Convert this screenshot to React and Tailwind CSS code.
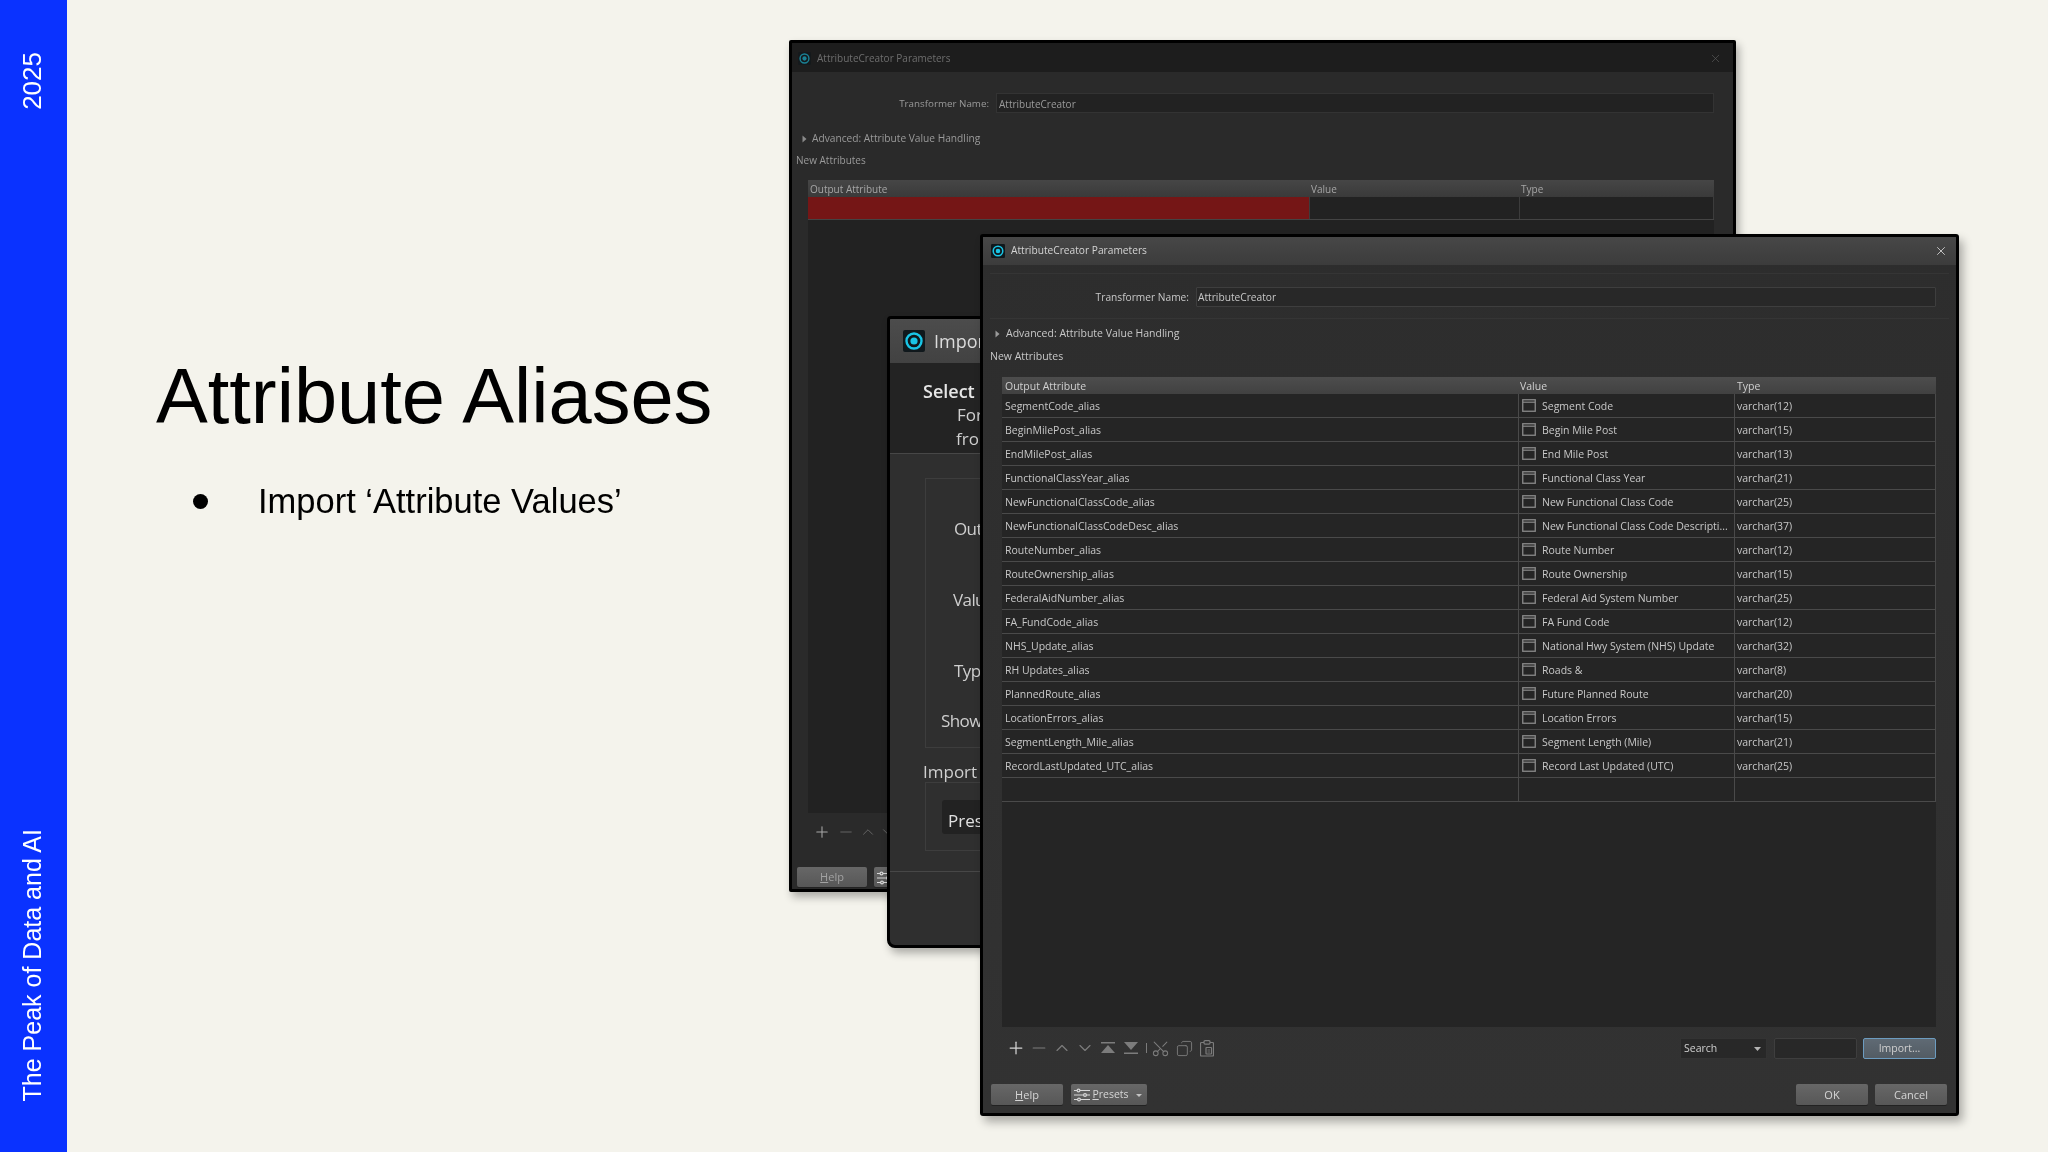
import React from "react";
import { Plus, Minus, ChevronUp, ChevronDown, Scissors, Copy, X } from "lucide-react";

const rows = [
  ["SegmentCode_alias", "Segment Code", "varchar(12)"],
  ["BeginMilePost_alias", "Begin Mile Post", "varchar(15)"],
  ["EndMilePost_alias", "End Mile Post", "varchar(13)"],
  ["FunctionalClassYear_alias", "Functional Class Year", "varchar(21)"],
  ["NewFunctionalClassCode_alias", "New Functional Class Code", "varchar(25)"],
  ["NewFunctionalClassCodeDesc_alias", "New Functional Class Code Descripti...", "varchar(37)"],
  ["RouteNumber_alias", "Route Number", "varchar(12)"],
  ["RouteOwnership_alias", "Route Ownership", "varchar(15)"],
  ["FederalAidNumber_alias", "Federal Aid System Number", "varchar(25)"],
  ["FA_FundCode_alias", "FA Fund Code", "varchar(12)"],
  ["NHS_Update_alias", "National Hwy System (NHS) Update", "varchar(32)"],
  ["RH Updates_alias", "Roads &", "varchar(8)"],
  ["PlannedRoute_alias", "Future Planned Route", "varchar(20)"],
  ["LocationErrors_alias", "Location Errors", "varchar(15)"],
  ["SegmentLength_Mile_alias", "Segment Length (Mile)", "varchar(21)"],
  ["RecordLastUpdated_UTC_alias", "Record Last Updated (UTC)", "varchar(25)"],
];

function Logo({ size, dim }) {
  return (
    <svg width={size} height={size} viewBox="0 0 22 22" className={dim ? "opacity-60 shrink-0" : "shrink-0"}>
      <rect width="22" height="22" rx="2" fill="#10181c" />
      <circle cx="11" cy="11" r="7.5" fill="none" stroke="#19c5e6" strokeWidth="2.4" />
      <circle cx="11" cy="11" r="3.6" fill="#19c5e6" />
    </svg>
  );
}

function ValueIcon() {
  return (
    <svg width="14" height="13" viewBox="0 0 14 13" className="shrink-0 -mt-[2px]">
      <rect x="0.75" y="0.75" width="12.5" height="11.5" fill="none" stroke="#8a8a8a" strokeWidth="1.3" />
      <line x1="1" y1="3.2" x2="13" y2="3.2" stroke="#8a8a8a" strokeWidth="1.2" />
    </svg>
  );
}

function MoveEdge({ top }) {
  return (
    <svg width="16" height="12" viewBox="0 0 16 12" className="shrink-0">
      {top ? (
        <>
          <rect x="1" y="0" width="14" height="1.5" fill="#7c7c7c" />
          <path d="M8 3 L15 11 L1 11 Z" fill="#7c7c7c" />
        </>
      ) : (
        <>
          <path d="M1 0 L15 0 L8 8 Z" fill="#7c7c7c" />
          <rect x="1" y="10.5" width="14" height="1.5" fill="#7c7c7c" />
        </>
      )}
    </svg>
  );
}

function PasteIcon() {
  return (
    <svg width="14" height="17" viewBox="0 0 14 17" fill="none" stroke="#7c7c7c" strokeWidth="1.2" className="shrink-0">
      <path d="M4 2.5H1.5a1 1 0 0 0-1 1V15a1 1 0 0 0 1 1H12.5a1 1 0 0 0 1-1V3.5a1 1 0 0 0-1-1H10" />
      <rect x="4" y="0.7" width="6" height="3.4" rx="1" />
      <rect x="6" y="7.5" width="5.5" height="6.5" rx="0.5" />
      <path d="M7.5 10H10M7.5 12H10" strokeWidth="0.8" />
    </svg>
  );
}

function PresetIcon() {
  return (
    <svg width="16" height="14" viewBox="0 0 16 14" className="shrink-0" stroke="#d8d8d8" strokeWidth="1.2" fill="none">
      <path d="M0 2.5H16M0 7H16M0 11.5H16" />
      <circle cx="4.5" cy="2.5" r="1.4" fill="#5e5e5e" />
      <circle cx="11" cy="7" r="1.4" fill="#5e5e5e" />
      <circle cx="5" cy="11.5" r="1.4" fill="#5e5e5e" />
    </svg>
  );
}

function Btn({ className, children }) {
  return (
    <div className={"h-[21px] pt-[1px] bg-gradient-to-b from-[#676767] to-[#575757] rounded-[2px] flex items-center justify-center text-[11px] text-[#d6d6d6] shadow-[0_1px_0_#222] " + className}>
      {children}
    </div>
  );
}

function Arrow({ color }) {
  return (
    <svg width="5" height="8" viewBox="0 0 5 8" className="shrink-0"><path d="M0.5 0.5 L4.5 4 L0.5 7.5 Z" fill={color} /></svg>
  );
}

function BackWindow() {
  return (
    <div className="absolute left-[789px] top-[40px] w-[947px] h-[852px] bg-[#2a2a2a] border-[3px] border-black rounded-[2px] shadow-[3px_5px_9px_rgba(0,0,0,0.3)] flex flex-col text-[10px] text-[#9a9a9a] overflow-hidden">
      <div className="h-[29px] shrink-0 bg-[#1d1d1d] flex items-center pl-[6px] pr-[11px] gap-[6px] text-[#6e6e6e] pt-[1px]">
        <Logo size={13} dim />
        <span className="flex-1">AttributeCreator Parameters</span>
        <X size={13} strokeWidth={1.2} className="text-[#5c5c5c]" />
      </div>
      <div className="flex items-center mt-[21px] pr-[19px] shrink-0">
        <div className="w-[197px] text-right pt-[2px] text-[9.8px]">Transformer Name:</div>
        <div className="ml-[7px] flex-1 h-[20px] bg-[#222222] border border-[#333333] flex items-center pl-[2px] pt-[2px]">AttributeCreator</div>
      </div>
      <div className="flex items-center mt-[18px] h-[16px] pl-[10px] gap-[5px] shrink-0 text-[10.2px]">
        <Arrow color="#8a8a8a" />
        <span>Advanced: Attribute Value Handling</span>
      </div>
      <div className="mt-[5px] h-[16px] pl-[4px] shrink-0 leading-[16px]">New Attributes</div>
      <div className="mt-[12px] ml-[16px] mr-[19px] flex-1 flex flex-col bg-[#222222] min-h-0">
        <div className="h-[17px] shrink-0 bg-gradient-to-b from-[#464646] to-[#3a3a3a] flex items-center text-[#a6a6a6] pt-[2px]">
          <div className="w-[501px] pl-[2px]">Output Attribute</div>
          <div className="w-[210px] pl-[2px]">Value</div>
          <div className="flex-1 pl-[2px]">Type</div>
        </div>
        <div className="h-[23px] shrink-0 flex border-b border-[#444444]">
          <div className="w-[501px] bg-[#751616]"></div>
          <div className="w-[210px] border-l border-[#3c3c3c]"></div>
          <div className="flex-1 border-l border-[#3c3c3c] border-r"></div>
        </div>
      </div>
      <div className="h-[38px] shrink-0 flex items-center pl-[21px] gap-[2px] text-[#6a6a6a]">
        <Plus size={18} strokeWidth={1.4} className="text-[#a8a8a8]" />
        <Minus size={18} strokeWidth={1.2} className="ml-[4px]" />
        <ChevronUp size={18} strokeWidth={1.2} className="ml-[2px]" />
        <ChevronDown size={18} strokeWidth={1.2} />
      </div>
      <div className="h-[38px] shrink-0 flex gap-[7px] pl-[5px] pt-[16px]">
        <Btn className="w-[70px] !h-[20px] !text-[#a2a2a2]"><span><u>H</u>elp</span></Btn>
        <Btn className="w-[76px] !h-[20px] justify-start pl-[3px]"><PresetIcon /></Btn>
      </div>
    </div>
  );
}

function MiddleWindow() {
  return (
    <div className="absolute left-[887px] top-[316px] w-[110px] h-[632px] bg-[#2f2f2f] border-[3px] border-black rounded-tl-[4px] rounded-bl-[8px] shadow-[3px_5px_9px_rgba(0,0,0,0.3)] flex flex-col overflow-hidden text-[18px] text-[#cfcfcf] whitespace-nowrap">
      <div className="h-[44px] shrink-0 bg-gradient-to-b from-[#4c4c4c] to-[#424242] flex items-center pl-[13px] gap-[9px] text-[#dcdcdc]">
        <Logo size={22} />
        <span>Import</span>
      </div>
      <div className="h-[91px] shrink-0 bg-[#232323] border-b border-[#474747] flex flex-col">
        <div className="pl-[33px] pt-[15px] h-[39px] font-semibold text-[#e6e6e6]">Select a</div>
        <div className="pl-[67px] h-[24px] leading-[24px] pt-[1px] text-[17px]">For</div>
        <div className="pl-[66px] h-[24px] leading-[24px] pt-[1px] text-[17px]">from</div>
      </div>
      <div className="ml-[35px] mt-[24px] h-[270px] shrink-0 border-l border-t border-b border-[#3d3d3d] relative flex flex-col text-[17px] tracking-[-0.6px]">
        <div className="pl-[28px] mt-[38px] h-[24px] leading-[24px]">Output</div>
        <div className="pl-[27px] mt-[47px] h-[24px] leading-[24px]">Value</div>
        <div className="pl-[28px] mt-[47px] h-[24px] leading-[24px]">Type</div>
        <div className="pl-[15px] mt-[26px] h-[24px] leading-[24px]">Show</div>
      </div>
      <div className="pl-[33px] mt-[12px] h-[24px] leading-[24px] text-[17px]">Import</div>
      <div className="ml-[35px] h-[69px] mt-[-2px] shrink-0 border-l border-t border-b border-[#3d3d3d] pl-[16px] pt-[17px]">
        <div className="h-[34px] bg-[#222222] rounded-l-[3px] flex items-center pl-[6px] pt-[8px] text-[#e0e0e0] text-[17px]">Preset</div>
      </div>
      <div className="mt-[20px] border-t border-[#474747]"></div>
    </div>
  );
}

function FrontWindow() {
  return (
    <div className="absolute left-[980px] top-[234px] w-[979px] h-[882px] bg-gradient-to-b from-[#2d2d2d] to-[#323232] border-[3px] border-black rounded-[3px] shadow-[4px_6px_10px_rgba(0,0,0,0.3)] flex flex-col text-[10.5px] text-[#c8c8c8] overflow-hidden">
      <div className="h-[28px] shrink-0 bg-gradient-to-b from-[#474747] to-[#3c3c3c] flex items-center pl-[8px] pr-[8px] gap-[6px] text-[#d4d4d4] text-[10.2px]">
        <Logo size={14} />
        <span className="flex-1">AttributeCreator Parameters</span>
        <X size={14} strokeWidth={1.4} className="text-[#dddddd]" />
      </div>
      <div className="flex items-center mt-[8px] mx-[7px] pt-[13px] pb-[11px] pr-[13px] border-y border-[#353535] shrink-0 text-[10.2px]">
        <div className="w-[199px] text-right pt-[2px]">Transformer Name:</div>
        <div className="ml-[7px] flex-1 h-[20px] bg-[#282828] border border-[#3e3e3e] rounded-[1px] flex items-center pl-[1px] pt-[2px]">AttributeCreator</div>
      </div>
      <div className="flex items-center mt-[7px] h-[16px] pl-[12px] gap-[6px] shrink-0">
        <Arrow color="#9a9a9a" />
        <span>Advanced: Attribute Value Handling</span>
      </div>
      <div className="mt-[6px] h-[16px] pl-[7px] shrink-0 leading-[16px]">New Attributes</div>
      <div className="mt-[13px] ml-[19px] mr-[20px] h-[650px] shrink-0 bg-[#252525] flex flex-col">
        <div className="h-[17px] shrink-0 bg-gradient-to-b from-[#4d4d4d] to-[#414141] flex items-center text-[#d0d0d0] pt-[2px]">
          <div className="w-[516px] pl-[3px]">Output Attribute</div>
          <div className="w-[216px] pl-[2px]">Value</div>
          <div className="flex-1 pl-[3px]">Type</div>
        </div>
        {rows.map((r) => (
          <div key={r[0]} className="h-[24px] shrink-0 flex items-center border-b border-[#4a4a4a]">
            <div className="w-[516px] pl-[3px] h-full flex items-center pt-[2px]">{r[0]}</div>
            <div className="w-[216px] pl-[3px] h-full flex items-center gap-[6px] border-l border-[#4a4a4a] whitespace-nowrap overflow-hidden pt-[2px]">
              <ValueIcon />
              <span>{r[1]}</span>
            </div>
            <div className="flex-1 pl-[2px] h-full flex items-center border-l border-r border-[#4a4a4a] pt-[2px]">{r[2]}</div>
          </div>
        ))}
        <div className="h-[24px] shrink-0 flex border-b border-[#4a4a4a]">
          <div className="w-[516px]"></div>
          <div className="w-[216px] border-l border-[#4a4a4a]"></div>
          <div className="flex-1 border-l border-r border-[#4a4a4a]"></div>
        </div>
      </div>
      <div className="h-[42px] shrink-0 flex items-center pl-[23px] pr-[20px] text-[#7c7c7c]">
        <Plus size={20} strokeWidth={1.5} className="text-[#d4d4d4]" />
        <Minus size={20} strokeWidth={1.4} className="ml-[3px]" />
        <ChevronUp size={20} strokeWidth={1.4} className="ml-[3px]" />
        <ChevronDown size={20} strokeWidth={1.4} className="ml-[3px]" />
        <div className="ml-[5px]"><MoveEdge top /></div>
        <div className="ml-[7px]"><MoveEdge /></div>
        <div className="w-px h-[10px] bg-[#7c7c7c] ml-[7px]"></div>
        <Scissors size={19} strokeWidth={1.3} className="ml-[4px] -rotate-90" />
        <Copy size={17} strokeWidth={1.3} className="ml-[6px] -scale-x-100" />
        <div className="ml-[7px]"><PasteIcon /></div>
        <div className="ml-auto flex items-center gap-[7px] text-[#cfcfcf]">
          <div className="w-[87px] h-[21px] bg-[#282828] border border-[#333333] flex items-center justify-between pl-[3px] pr-[5px] pt-[1px]">
            <span>Search</span>
            <svg width="7" height="4" viewBox="0 0 7 4"><path d="M0 0H7L3.5 4Z" fill="#b4b4b4" /></svg>
          </div>
          <div className="w-[83px] h-[21px] bg-[#282828] border border-[#3e3e3e] rounded-[2px]"></div>
          <div className="ml-[-1px] w-[73px] h-[21px] bg-gradient-to-b from-[#5f6a74] to-[#535c64] border border-[#6c9cc0] rounded-[2px] flex items-center justify-center text-[#d0d0d0] pt-[1px]">Import...</div>
        </div>
      </div>
      <div className="mt-[15px] flex items-center pl-[8px] pr-[9px]">
        <Btn className="w-[72px]"><span><u>H</u>elp</span></Btn>
        <Btn className="w-[76px] ml-[8px] gap-[2px] pr-[2px]">
          <PresetIcon />
          <span className="text-[10.5px]"><u>P</u>resets</span>
          <svg width="6" height="3" viewBox="0 0 6 3" className="ml-[5px]"><path d="M0 0H6L3 3Z" fill="#c4c4c4" /></svg>
        </Btn>
        <Btn className="w-[72px] ml-auto">OK</Btn>
        <Btn className="w-[72px] ml-[7px]">Cancel</Btn>
      </div>
    </div>
  );
}

export default function App() {
  return (
    <div className="relative w-[2048px] h-[1152px] overflow-hidden bg-[#f4f3ec] flex font-['Liberation_Sans',sans-serif] blur-[0.4px]">
      <div className="w-[67px] h-full shrink-0 bg-[#0a32ff] flex flex-col items-center justify-between pt-[52px] pb-[51px] pr-[4px] text-white text-[26px] leading-[30px]">
        <div className="[writing-mode:vertical-rl] rotate-180">2025</div>
        <div className="[writing-mode:vertical-rl] rotate-180 whitespace-nowrap text-[25px]">The Peak of Data and AI</div>
      </div>
      <div className="flex-1 pl-[89px] pt-[351px] text-black">
        <h1 className="text-[77.6px] leading-[90px] whitespace-nowrap">Attribute Aliases</h1>
        <div className="mt-[38px] ml-[37px] flex items-center">
          <div className="w-[15px] h-[15px] rounded-full bg-black"></div>
          <div className="ml-[50px] text-[34.5px] leading-[44px] whitespace-nowrap">Import ‘Attribute Values’</div>
        </div>
      </div>
      <div className="font-['Open_Sans','Noto_Sans',sans-serif]">
        <BackWindow />
        <MiddleWindow />
        <FrontWindow />
      </div>
    </div>
  );
}
